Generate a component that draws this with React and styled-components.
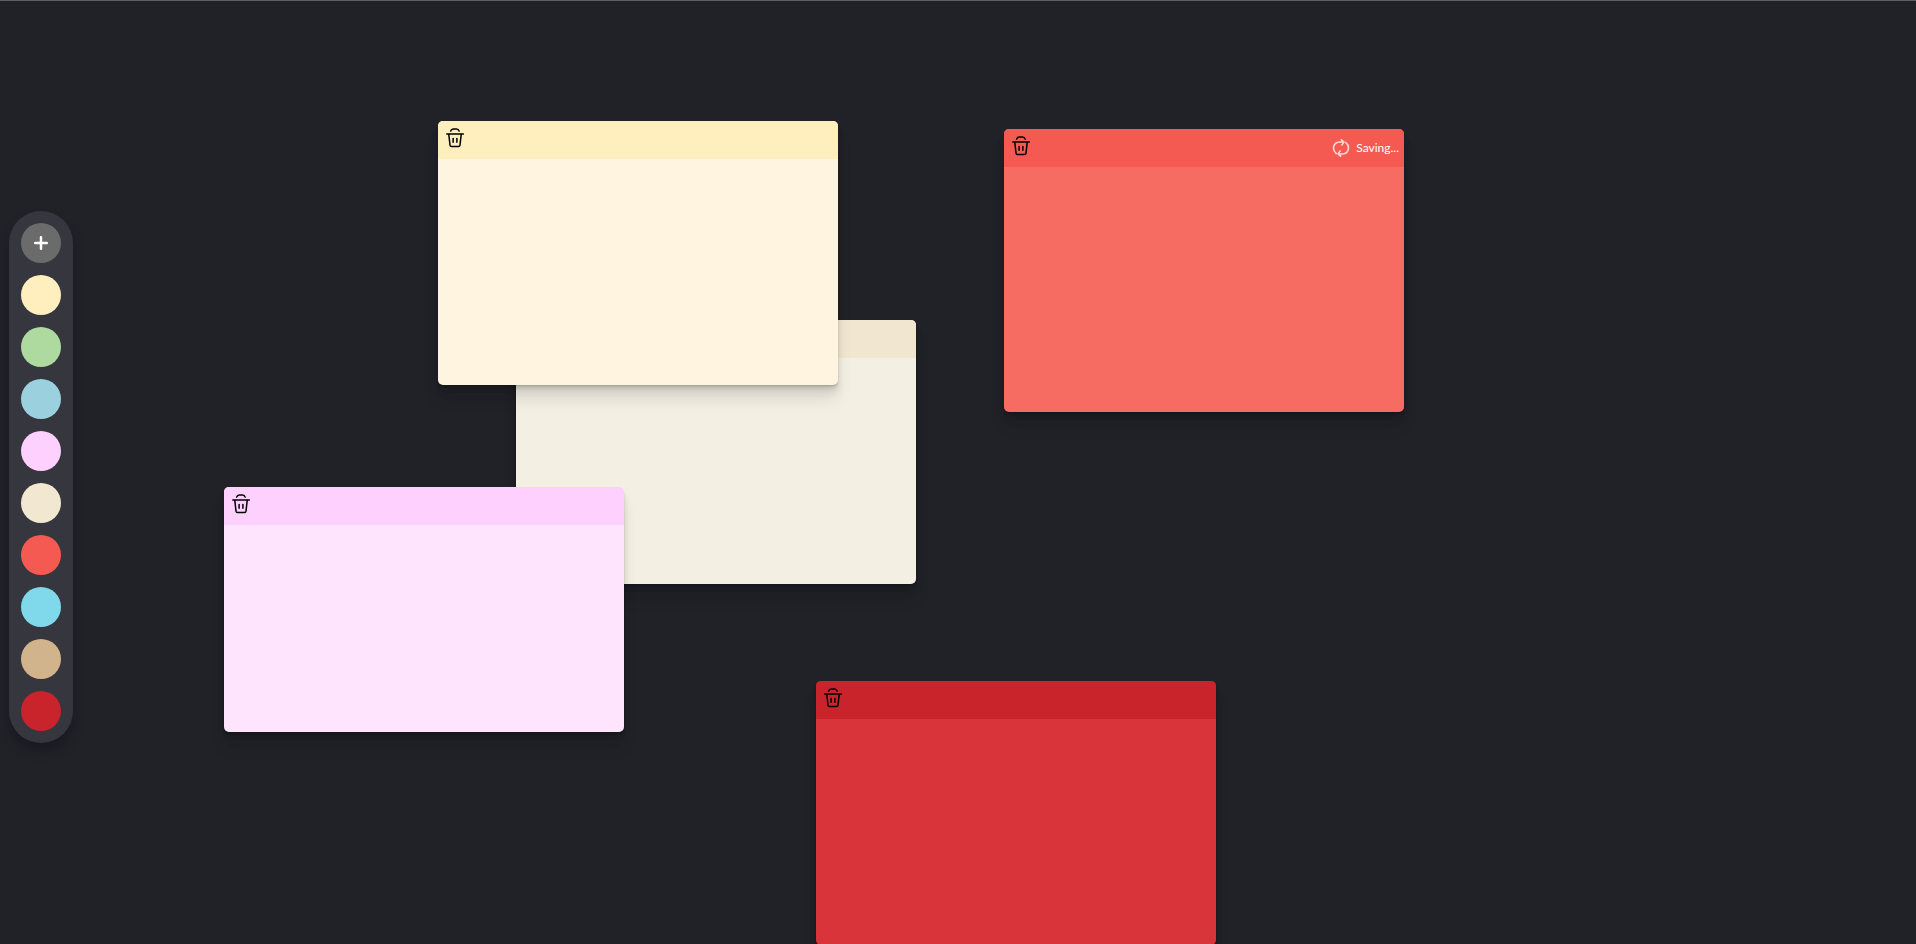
import React, { useState } from "react";
import styled, { createGlobalStyle } from "styled-components";

const GlobalStyle = createGlobalStyle`
  *, *::before, *::after { box-sizing: border-box; }
  body {
    margin: 0;
    background: #212228;
    font-family: "Open Sans", "Noto Sans", sans-serif;
  }
`;

const Board = styled.main`
  position: relative;
  height: 100vh;
  overflow: hidden;
  border-top: 1px solid #5f6063;
  background: #212228;
`;

const Rail = styled.aside`
  display: flex;
  align-items: center;
  height: 100%;
  padding: 9px 0 0 9px;
`;

const Palette = styled.div`
  display: flex;
  flex-direction: column;
  align-items: center;
  gap: 12px;
  width: 64px;
  padding: 12px;
  border-radius: 40px;
  background: #35363e;
  box-shadow: 0 8px 12px rgba(0, 0, 0, 0.25);
`;

const RoundButton = styled.button`
  display: grid;
  place-items: center;
  width: 40px;
  height: 40px;
  padding: 0;
  border: 0;
  border-radius: 50%;
  background: ${(p) => p.$color};
  cursor: pointer;
`;

const Note = styled.article`
  position: absolute;
  left: ${(p) => p.$x}px;
  top: ${(p) => p.$y}px;
  z-index: ${(p) => p.$layer};
  width: 400px;
  border-radius: 5px;
  overflow: hidden;
  background: ${(p) => p.$color};
  box-shadow: 0 1px 1px hsl(0deg 0% 0% / 0.075), 0 2px 2px hsl(0deg 0% 0% / 0.075),
    0 4px 4px hsl(0deg 0% 0% / 0.075), 0 8px 8px hsl(0deg 0% 0% / 0.075),
    0 16px 16px hsl(0deg 0% 0% / 0.075);
`;

const NoteHeader = styled.header`
  display: flex;
  justify-content: space-between;
  height: 38px;
  padding: 5px;
  background: ${(p) => p.$color};
`;

const DeleteButton = styled.button`
  display: block;
  width: 24px;
  height: 24px;
  padding: 0;
  border: 0;
  background: none;
  color: #000;
  cursor: pointer;
`;

const Status = styled.div`
  display: flex;
  align-items: center;
  gap: 6px;
  color: ${(p) => p.$color};
  font-family: Lato, "Open Sans", sans-serif;
  font-size: 12px;
  line-height: 16px;
`;

const NoteText = styled.textarea`
  display: block;
  width: 100%;
  height: ${(p) => p.$height}px;
  padding: 16px;
  border: 0;
  outline: 0;
  resize: none;
  background: transparent;
  color: ${(p) => p.$text};
  font: 16px/24px "Open Sans", "Noto Sans", sans-serif;
`;

const Trash = () => (
  <svg width="24" height="24" viewBox="0 0 24 24" fill="none" stroke="currentColor" strokeWidth="1.5" strokeLinecap="round" strokeLinejoin="round" aria-hidden="true">
    <path d="M3.8 8H20.4" />
    <path d="M5.8 8.4L7 19.2Q7.2 20.5 8.5 20.5H15.5Q16.8 20.5 17 19.2L18.2 8.4" />
    <path d="M10.1 12.5V16.3" />
    <path d="M13.9 12.5V16.3" />
    <path d="M7.6 5.1C8 3.7 9 3 10.4 3H13.4C14.8 3 15.8 3.7 16.2 5.1" />
  </svg>
);

const Spinner = () => (
  <svg width="18" height="18" viewBox="0 0 18 18" fill="none" stroke="#fed9d2" strokeWidth="1.6" strokeLinecap="round" strokeLinejoin="round" aria-hidden="true">
    <path d="M4.3 14.6C-0.4 10.6 1 3 8.2 3H11.4" />
    <path d="M9.4 0.8L11.9 3.1L9.9 6" />
    <path d="M13.7 3.4C18.4 7.4 17 15 9.8 15H6.6" />
    <path d="M8.6 17.2L6.1 14.9L8.1 12" />
  </svg>
);

const Plus = () => (
  <svg width="16" height="16" viewBox="0 0 16 16" stroke="#fff" strokeWidth="2.5" strokeLinecap="round" aria-hidden="true">
    <path d="M8 2.2V13.8M2.2 8H13.8" />
  </svg>
);

const swatches = [
  ["Yellow", "#ffeebe"],
  ["Green", "#afda9f"],
  ["Blue", "#9bd1de"],
  ["Pink", "#fed0fd"],
  ["Beige", "#f2e7d0"],
  ["Coral", "#f55a52"],
  ["Cyan", "#7fd9ea"],
  ["Tan", "#d2b48c"],
  ["Red", "#c9232c"],
];

const initialNotes = [
  { id: 1, x: 516, y: 319, layer: 1, header: "#f1e7d0", body: "#f3efe3", height: 226, text: "#18181a" },
  { id: 2, x: 438, y: 120, layer: 2, header: "#ffeebe", body: "#fff4df", height: 226, text: "#18181a" },
  { id: 3, x: 224, y: 486, layer: 3, header: "#fed0fd", body: "#fee5fd", height: 207, text: "#18181a" },
  { id: 4, x: 1004, y: 128, layer: 1, header: "#f55a52", body: "#f66c62", height: 245, text: "#ffffff", saving: true },
  { id: 5, x: 816, y: 680, layer: 1, header: "#c9232c", body: "#d9343a", height: 226, text: "#ffffff" },
];

export default function App() {
  const [notes, setNotes] = useState(initialNotes);
  const remove = (id) => setNotes((all) => all.filter((n) => n.id !== id));

  return (
    <>
      <GlobalStyle />
      <Board>
        <Rail>
          <Palette role="toolbar" aria-label="Note tools" aria-orientation="vertical">
            <RoundButton type="button" $color="#6b6b6b" aria-label="Add note">
              <Plus />
            </RoundButton>
            {swatches.map(([name, color]) => (
              <RoundButton key={name} type="button" $color={color} aria-label={name} />
            ))}
          </Palette>
        </Rail>
        {notes.map((n) => (
          <Note key={n.id} $x={n.x} $y={n.y} $layer={n.layer} $color={n.body}>
            <NoteHeader $color={n.header}>
              <DeleteButton type="button" aria-label="Delete note" onClick={() => remove(n.id)}>
                <Trash />
              </DeleteButton>
              {n.saving && (
                <Status role="status" $color={n.text}>
                  <Spinner />
                  <span>Saving...</span>
                </Status>
              )}
            </NoteHeader>
            <NoteText aria-label="Note text" $height={n.height} $text={n.text} />
          </Note>
        ))}
      </Board>
    </>
  );
}
